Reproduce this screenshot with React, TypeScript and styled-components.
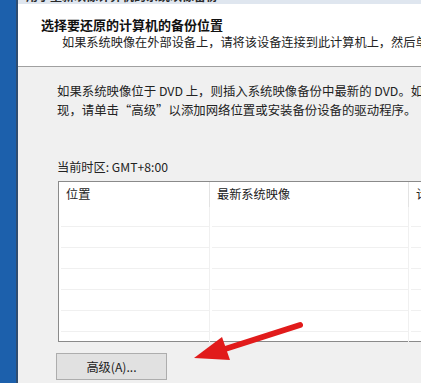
import styled, { createGlobalStyle } from 'styled-components';

const GlobalStyle = createGlobalStyle`
  html, body {
    margin: 0;
    padding: 0;
    overflow: hidden;
    background: #f0f0f0;
  }
  body {
    font-family: "Noto Sans CJK SC", "Noto Sans", sans-serif;
    color: #1a1a1a;
  }
`;

const Screen = styled.div`
  position: relative;
  display: flex;
  width: 421px;
  height: 383px;
  overflow: hidden;
`;

const DesktopEdge = styled.div`
  width: 16px;
  flex: none;
  background: #1c60ac;
  border-right: 2px solid #2f4d70;
`;

const Window = styled.div`
  flex: 1;
  display: flex;
  flex-direction: column;
  min-width: 0;
  background: #f0f0f0;
`;

const TitleBar = styled.div`
  height: 4px;
  flex: none;
  overflow: hidden;
  background: #dfe6ef;
  padding-left: 8px;
`;

const TitleText = styled.div`
  margin-top: -10px;
  font-size: 12px;
  font-weight: bold;
  line-height: 12px;
  color: #2a2a2a;
  white-space: nowrap;
`;

const Header = styled.div`
  height: 63px;
  flex: none;
  box-sizing: border-box;
  background: #ffffff;
  border-bottom: 1px solid #a0a0a0;
  padding: 13px 0 0 23px;
  white-space: nowrap;
`;

const Heading = styled.div`
  font-size: 13px;
  font-weight: 700;
  line-height: 16px;
  color: #111;
`;

const SubText = styled.div`
  font-size: 12.2px;
  line-height: 16px;
  margin-top: 1px;
  padding-left: 21px;
  color: #222;
`;

const Body = styled.div`
  flex: 1;
  padding: 15px 0 0 39px;
  display: flex;
  flex-direction: column;
`;

const Para = styled.p`
  margin: 0;
  font-size: 12.4px;
  line-height: 19px;
  white-space: nowrap;
  color: #222;
`;

const TimeZone = styled.div`
  margin-top: 39px;
  font-size: 12.2px;
  line-height: 16px;
  color: #222;
`;

const Table = styled.div`
  margin: 6px 0 0 1px;
  width: 420px;
  height: 161px;
  box-sizing: border-box;
  flex: none;
  background: #ffffff;
  border: 1px solid #8a8a8a;
  border-right: none;
  display: grid;
  grid-template-columns: 151px 199px 1fr;
  grid-template-rows: 25px 20px repeat(6, 21px);
`;

const HeadCell = styled.div<{ $last?: boolean }>`
  font-size: 12.2px;
  line-height: 25px;
  padding-left: 7px;
  white-space: nowrap;
  overflow: hidden;
  color: #222;
  border-right: ${(p) => (p.$last ? 'none' : '1px solid #e3e3e3')};
`;

const Cell = styled.div<{ $last?: boolean }>`
  border-bottom: 1px solid #f0f0f0;
  border-right: ${(p) => (p.$last ? 'none' : '1px solid #f0f0f0')};
  margin-left: 2px;
`;

const Button = styled.button`
  margin-top: 11px;
  width: 111px;
  height: 27px;
  flex: none;
  box-sizing: border-box;
  background: #e1e1e1;
  border: 1px solid #adadad;
  font-family: inherit;
  font-size: 12.2px;
  color: #222;
  padding: 0;
  padding-top: 1px;
  margin-left: -1px;
`;

const Arrow = styled.svg`
  position: absolute;
  left: 0;
  top: 0;
  pointer-events: none;
`;

const columns = ['位置', '最新系统映像', '计算机'];

export default function App() {
  const rows = Array.from({ length: 7 });
  return (
    <>
      <GlobalStyle />
      <Screen>
        <DesktopEdge />
        <Window>
          <TitleBar>
            <TitleText>用于重新映像计算机的系统映像备份</TitleText>
          </TitleBar>
          <Header>
            <Heading>选择要还原的计算机的备份位置</Heading>
            <SubText>如果系统映像在外部设备上，请将该设备连接到此计算机上，然后单击“刷新”。</SubText>
          </Header>
          <Body>
            <Para>如果系统映像位于 DVD 上，则插入系统映像备份中最新的 DVD。如果未发</Para>
            <Para>现，请单击“高级”以添加网络位置或安装备份设备的驱动程序。</Para>
            <TimeZone>当前时区: GMT+8:00</TimeZone>
            <Table>
              {columns.map((c, i) => (
                <HeadCell key={c} $last={i === 2}>
                  {c}
                </HeadCell>
              ))}
              {rows.map((_, r) =>
                columns.map((c, i) => <Cell key={`${r}-${c}`} $last={i === 2} />)
              )}
            </Table>
            <Button>高级(A)...</Button>
          </Body>
        </Window>
        <Arrow width="421" height="383" viewBox="0 0 421 383">
          <line x1="300" y1="325" x2="222" y2="350" stroke="#e11b1b" strokeWidth="6" strokeLinecap="round" />
          <polygon points="194,358 222,337 230,360" fill="#e11b1b" />
        </Arrow>
      </Screen>
    </>
  );
}
